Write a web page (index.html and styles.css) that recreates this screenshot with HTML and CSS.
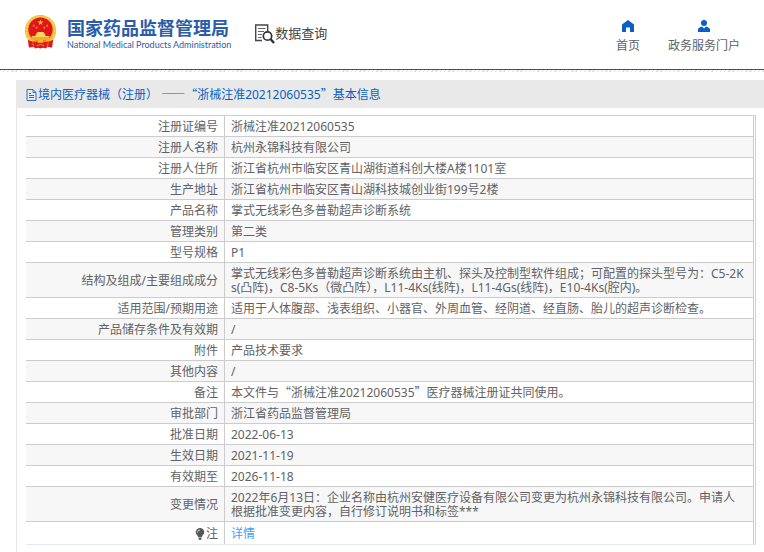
FILE: index.html
```html
<!DOCTYPE html>
<html lang="zh-CN">
<head>
<meta charset="utf-8">
<title>数据查询 - 国家药品监督管理局</title>
<link rel="stylesheet" href="styles.css">
</head>
<body>
<header class="header">
  <a class="brand" href="#">
    <svg class="emblem" viewBox="0 0 34 36" aria-hidden="true">
      <path d="M5 25h24l-1 9-5-1-6 2-6-2-5 1z" fill="#d8161b"/>
      <circle cx="17" cy="16.500" r="16" fill="#f3b62f"/>
      <circle cx="17" cy="16.500" r="14.500" fill="none" stroke="#ffda63" stroke-width="1.500" stroke-dasharray="2 1"/>
      <circle cx="17" cy="15.500" r="12.500" fill="#e2171c"/>
      <path d="M17 5l.8 2.200h2.300l-1.900 1.400.7 2.200-1.900-1.300-1.900 1.300.7-2.200-1.900-1.400h2.300z" fill="#ffc53d"/>
      <g fill="#f7a52d"><circle cx="10" cy="11.500" r=".9"/><circle cx="13" cy="13.500" r=".9"/><circle cx="21" cy="13.500" r=".9"/><circle cx="24" cy="11.500" r=".9"/></g>
      <path d="M13 19l1-1h6l1 1v1h1v2h4v2H8v-2h4v-2h1z" fill="#ffd45a"/>
      <path d="M7 24h20l-3 3H10z" fill="#f5a928"/>
      <path d="M4 26c3 2 6 2 9 2l4-1 4 1c3 0 6 0 9-2l-1 8-4-1-3 2-5-2-5 2-3-2-4 1z" fill="#dc1a1e"/>
      <path d="M14 28a3 2.500 0 0 1 6 0v1h-6z" fill="#f6b52e"/>
      <path d="M9 29l1 4M25 29l-1 4M13 32l4-1 4 1" fill="none" stroke="#f2a52a" stroke-width=".8"/>
    </svg>
    <span class="brand-text">
      <span class="brand-name">国家药品监督管理局</span>
      <span class="brand-sub">National Medical Products Administration</span>
    </span>
  </a>
  <a class="query" href="#">
    <svg class="query-icon" viewBox="0 0 20 20" aria-hidden="true">
      <path d="M7 16.500H.700V1h12v6" fill="none" stroke="#44444f" stroke-width="1.400"/>
      <path d="M3 4.500h7.500M3 7.500h6M3 10.500h4M3 13.500h3.500" stroke="#666670" stroke-width="1.200"/>
      <circle cx="12.500" cy="12" r="4.200" fill="#fff" stroke="#30303e" stroke-width="1.700"/>
      <path d="M15.500 15l3.500 4" stroke="#30303e" stroke-width="2.400"/>
    </svg>
    <span>数据查询</span>
  </a>
  <nav class="nav">
    <a href="#">
      <svg viewBox="0 0 12 12" aria-hidden="true"><path d="M6 0l6 4.500V12H8V7.500H4V12H0V4.500z" fill="#0a5fc4"/></svg>
      <span>首页</span>
    </a>
    <a href="#">
      <svg viewBox="0 0 12 12" aria-hidden="true"><circle cx="6" cy="3" r="3" fill="#0a5fc4"/><path d="M0 12V9.500C0 8 2 7 4 6.500l2 2 2-2c2 .5 4 1.500 4 3V12z" fill="#0a5fc4"/></svg>
      <span>政务服务门户</span>
    </a>
  </nav>
</header>
<main class="panel">
  <h1 class="panel-title">
    <svg class="doc-icon" viewBox="0 0 11 12" aria-hidden="true"><path d="M1 .5h6l3 3v8H1zM7 .5v3h3M3 4.500h2M3 6.500h5M3 8.500h5" fill="none" stroke="#2b6fc9"/></svg>
    <span>境内医疗器械（注册） <span class="cjk">——“</span>浙械注准20212060535<span class="cjk">”</span>基本信息</span>
  </h1>
  <div class="panel-body">
    <div class="table-frame">
      <table class="info">
        <tbody>
          <tr><th scope="row">注册证编号</th><td>浙械注准20212060535</td></tr>
          <tr><th scope="row">注册人名称</th><td>杭州永锦科技有限公司</td></tr>
          <tr><th scope="row">注册人住所</th><td>浙江省杭州市临安区青山湖街道科创大楼A楼1101室</td></tr>
          <tr><th scope="row">生产地址</th><td>浙江省杭州市临安区青山湖科技城创业街199号2楼</td></tr>
          <tr><th scope="row">产品名称</th><td>掌式无线彩色多普勒超声诊断系统</td></tr>
          <tr><th scope="row">管理类别</th><td>第二类</td></tr>
          <tr><th scope="row">型号规格</th><td>P1</td></tr>
          <tr><th scope="row">结构及组成/主要组成成分</th><td>掌式无线彩色多普勒超声诊断系统由主机、探头及控制型软件组成；可配置的探头型号为：C5-2Ks(凸阵)，C8-5Ks（微凸阵），L11-4Ks(线阵)，L11-4Gs(线阵)，E10-4Ks(腔内)。</td></tr>
          <tr><th scope="row">适用范围/预期用途</th><td>适用于人体腹部、浅表组织、小器官、外周血管、经阴道、经直肠、胎儿的超声诊断检查。</td></tr>
          <tr><th scope="row">产品储存条件及有效期</th><td>/</td></tr>
          <tr><th scope="row">附件</th><td>产品技术要求</td></tr>
          <tr><th scope="row">其他内容</th><td>/</td></tr>
          <tr><th scope="row">备注</th><td>本文件与<span class="cjk">“</span>浙械注准20212060535<span class="cjk">”</span>医疗器械注册证共同使用。</td></tr>
          <tr><th scope="row">审批部门</th><td>浙江省药品监督管理局</td></tr>
          <tr><th scope="row">批准日期</th><td>2022-06-13</td></tr>
          <tr><th scope="row">生效日期</th><td>2021-11-19</td></tr>
          <tr><th scope="row">有效期至</th><td>2026-11-18</td></tr>
          <tr><th scope="row">变更情况</th><td>2022年6月13日：企业名称由杭州安健医疗设备有限公司变更为杭州永锦科技有限公司。申请人根据批准变更内容，自行修订说明书和标签***</td></tr>
          <tr class="note"><th scope="row"><span class="note-label"><svg class="bulb" viewBox="0 0 10 12" aria-hidden="true"><path d="M5 0a4.300 4.300 0 0 1 4.300 4.300C9.300 6.500 7 7.500 6.800 9H3.200C3 7.500.7 6.500.7 4.300A4.300 4.300 0 0 1 5 0zM3.500 9.500h3V11l-1 1h-1l-1-1z" fill="#55585c"/><path d="M2.500 4.500C2.500 3 3.500 2 5 2" fill="none" stroke="#fff" stroke-width=".8"/></svg>注</span></th><td><a href="#">详情</a></td></tr>
        </tbody>
      </table>
    </div>
  </div>
</main>
</body>
</html>
```
FILE: styles.css
```css
* { box-sizing: border-box; }

body {
  margin: 0;
  background: #fff;
  color: #606266;
  font: 12px/14px "Noto Sans", "Noto Sans CJK SC", sans-serif;
  overflow: hidden;
}

a { color: inherit; text-decoration: none; }
svg { display: block; flex: none; }
.cjk { font-family: "Noto Sans CJK SC", sans-serif; line-height: 10px; }

.header {
  display: flex;
  align-items: flex-start;
  height: 70px;
  padding: 0 24px;
  border-bottom: 1px solid #0a5fb4;
}

.header::after {
  content: "";
  position: absolute;
  top: 70px;
  left: 0;
  right: 0;
  height: 2px;
  background: repeating-linear-gradient(135deg, #ddd 0 1px, #fff 1px 3px);
}

.brand { display: flex; gap: 10px; padding-top: 14px; color: #2a5caa; }
.emblem { width: 33px; height: 36px; }
.brand-text { display: flex; flex-direction: column; padding-top: 3px; white-space: nowrap; }
.brand-name { font: bold 18px/21px "Noto Sans CJK SC", sans-serif; }
.brand-sub { font: 9px/14px Lato, sans-serif; }

.query {
  display: flex;
  margin-left: 24px;
  padding-top: 24px;
  color: #444;
  font-size: 13px;
  line-height: 18px;
  white-space: nowrap;
}
.query-icon { width: 20px; height: 20px; }

.nav { display: flex; gap: 28px; margin-left: auto; padding-top: 20px; }
.nav a { display: flex; flex-direction: column; align-items: center; gap: 7px; white-space: nowrap; }
.nav svg { width: 12px; height: 12px; }

.panel { margin: 10px 0 0 16px; }

.panel-title {
  display: flex;
  align-items: center;
  height: 28px;
  margin: 0;
  padding: 2px 10px 0;
  background: #e9e9e9;
  color: #0a5fc4;
  font-size: 12px;
  font-weight: normal;
}
.doc-icon { width: 11px; height: 12px; margin-right: 1px; }

.panel-body {
  min-height: 444px;
  padding: 7px 8px 0 9px;
  border-left: 1px solid #e4e4ea;
}

.table-frame {
  padding-right: 1px;
  border: 1px solid #cfcfd4;
  border-width: 1px 1px 1px 0;
  border-bottom-color: #e4e8f4;
}

.info { width: 100%; border-collapse: separate; border-spacing: 0; }
.info th,
.info td {
  padding: 4px 6px 2px;
  border-right: 1px solid #ccc;
  border-bottom: 1px solid #ccc;
  font-weight: normal;
  word-break: break-all;
}
.info th { width: 199px; text-align: right; }
.info td { text-align: left; }
.info tr:nth-child(even) { background: #f7f7f7; }
.info .note th,
.info .note td { padding-top: 5px; padding-bottom: 3px; border-bottom: 0; }
.info a { color: #409eff; }
.note-label { display: flex; justify-content: flex-end; align-items: center; gap: 1px; }
.bulb { width: 10px; height: 12px; }
```
